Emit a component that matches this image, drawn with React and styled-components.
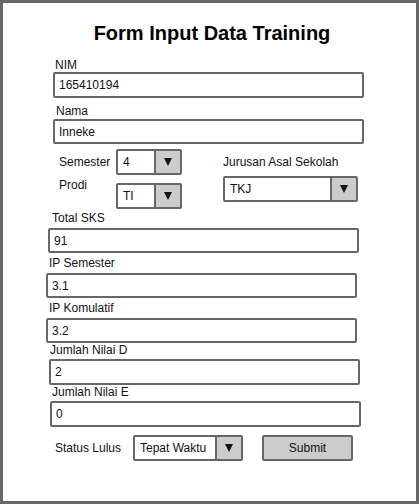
import React from "react";
import styled, { createGlobalStyle } from "styled-components";

const GlobalStyle = createGlobalStyle`
  body {
    margin: 0;
    background: #ffffff;
    font-family: "Liberation Sans", Arial, sans-serif;
  }
`;

const Frame = styled.div`
  box-sizing: border-box;
  width: 419px;
  height: 504px;
  border: 3px solid #676767;
  background: #ffffff;
  display: flex;
  flex-direction: column;
  color: #111;
  font-size: 12px;
`;

const Title = styled.h1`
  margin: 19px 0 0;
  padding-left: 5px;
  font-size: 20px;
  line-height: 23px;
  font-weight: bold;
  text-align: center;
  color: #000;
`;

const FieldWrap = styled.div`
  display: flex;
  flex-direction: column;
  margin-top: ${(p) => p.$mt}px;
  margin-left: ${(p) => p.$left - 3}px;
  width: ${(p) => p.$width}px;
`;

const Label = styled.label`
  display: block;
  height: 13px;
  line-height: 13px;
  font-size: 12px;
  margin-left: ${(p) => p.$shift || 0}px;
  margin-bottom: ${(p) => p.$gap || 0}px;
  white-space: nowrap;
`;

const Input = styled.input`
  box-sizing: border-box;
  width: 100%;
  height: ${(p) => p.$h || 26}px;
  margin: 0;
  border: 2px solid #676767;
  border-radius: 2px;
  padding: 0 0 0 4px;
  font-family: "Liberation Sans", Arial, sans-serif;
  font-size: 12px;
  color: #111;
  background: #fff;
  outline: none;
`;

const SelectBox = styled.div`
  box-sizing: border-box;
  display: flex;
  width: ${(p) => p.$width}px;
  height: 26px;
  border: 2px solid #676767;
  border-radius: 2px;
  background: #fff;
`;

const SelectValue = styled.div`
  flex: 1;
  display: flex;
  align-items: center;
  padding-left: ${(p) => p.$pad || 5}px;
  font-size: 12px;
  white-space: nowrap;
  overflow: hidden;
`;

const ArrowBox = styled.div`
  width: 24px;
  display: flex;
  align-items: center;
  justify-content: center;
  background: #cccccc;
  border-left: 2px solid #676767;
  &::after {
    content: "";
    width: 0;
    height: 0;
    border-left: 4px solid transparent;
    border-right: 4px solid transparent;
    border-top: 8px solid #111;
  }
`;

const Middle = styled.div`
  display: flex;
  margin-top: 5px;
  margin-left: 56px;
`;

const LeftCol = styled.div`
  display: flex;
  flex-direction: column;
  gap: 8px;
`;

const InlineRow = styled.div`
  display: flex;
  align-items: ${(p) => (p.$top ? "flex-start" : "center")};
`;

const InlineLabel = styled.span`
  width: ${(p) => p.$w}px;
  line-height: 13px;
  font-size: 12px;
  white-space: nowrap;
  margin-top: ${(p) => p.$mt || 0}px;
`;

const RightCol = styled.div`
  display: flex;
  flex-direction: column;
  gap: 7px;
  padding-top: 7px;
  margin-left: 41px;
`;

const StatusRow = styled.div`
  display: flex;
  align-items: center;
  margin-top: 8px;
  margin-left: 52px;
`;

const SubmitButton = styled.button`
  box-sizing: border-box;
  width: 91px;
  height: 26px;
  margin-left: 19px;
  border: 2px solid #676767;
  border-radius: 2px;
  background: #cccccc;
  font-family: "Liberation Sans", Arial, sans-serif;
  font-size: 12px;
  color: #111;
  padding: 0;
`;

const Field = ({ label, value, mt, left, width, gap, shift, h }) => (
  <FieldWrap $mt={mt} $left={left} $width={width}>
    <Label $gap={gap} $shift={shift}>
      {label}
    </Label>
    <Input $h={h} value={value} readOnly />
  </FieldWrap>
);

const Select = ({ value, width, pad }) => (
  <SelectBox $width={width}>
    <SelectValue $pad={pad}>{value}</SelectValue>
    <ArrowBox />
  </SelectBox>
);

export default function App() {
  return (
    <Frame>
      <GlobalStyle />
      <Title>Form Input Data Training</Title>
      <Field label="NIM" value="165410194" mt={14} left={53} width={311} shift={2} />
      <Field label="Nama" value="Inneke" mt={7} left={53} width={311} gap={1} shift={3} h={25} />

      <Middle>
        <LeftCol>
          <InlineRow>
            <InlineLabel $w={57}>Semester</InlineLabel>
            <Select value="4" width={66} pad={5} />
          </InlineRow>
          <InlineRow $top>
            <InlineLabel $w={57} $mt={-4}>Prodi</InlineLabel>
            <Select value="TI" width={66} pad={5} />
          </InlineRow>
        </LeftCol>
        <RightCol>
          <InlineLabel>Jurusan Asal Sekolah</InlineLabel>
          <Select value="TKJ" width={135} pad={5} />
        </RightCol>
      </Middle>

      <Field label="Total SKS" value="91" mt={3} left={48} width={311} gap={3} shift={4} h={25} />
      <Field label="IP Semester" value="3.1" mt={4} left={46} width={311} gap={3} shift={3} h={25} />
      <Field label="IP Komulatif" value="3.2" mt={4} left={46} width={311} gap={3} shift={3} h={25} />
      <Field label="Jumlah Nilai D" value="2" mt={1} left={49} width={311} gap={2} shift={1} />
      <Field label="Jumlah Nilai E" value="0" mt={1} left={50} width={311} gap={2} shift={2} />

      <StatusRow>
        <InlineLabel $w={78}>Status Lulus</InlineLabel>
        <Select value="Tepat Waktu" width={110} pad={5} />
        <SubmitButton>Submit</SubmitButton>
      </StatusRow>
    </Frame>
  );
}
